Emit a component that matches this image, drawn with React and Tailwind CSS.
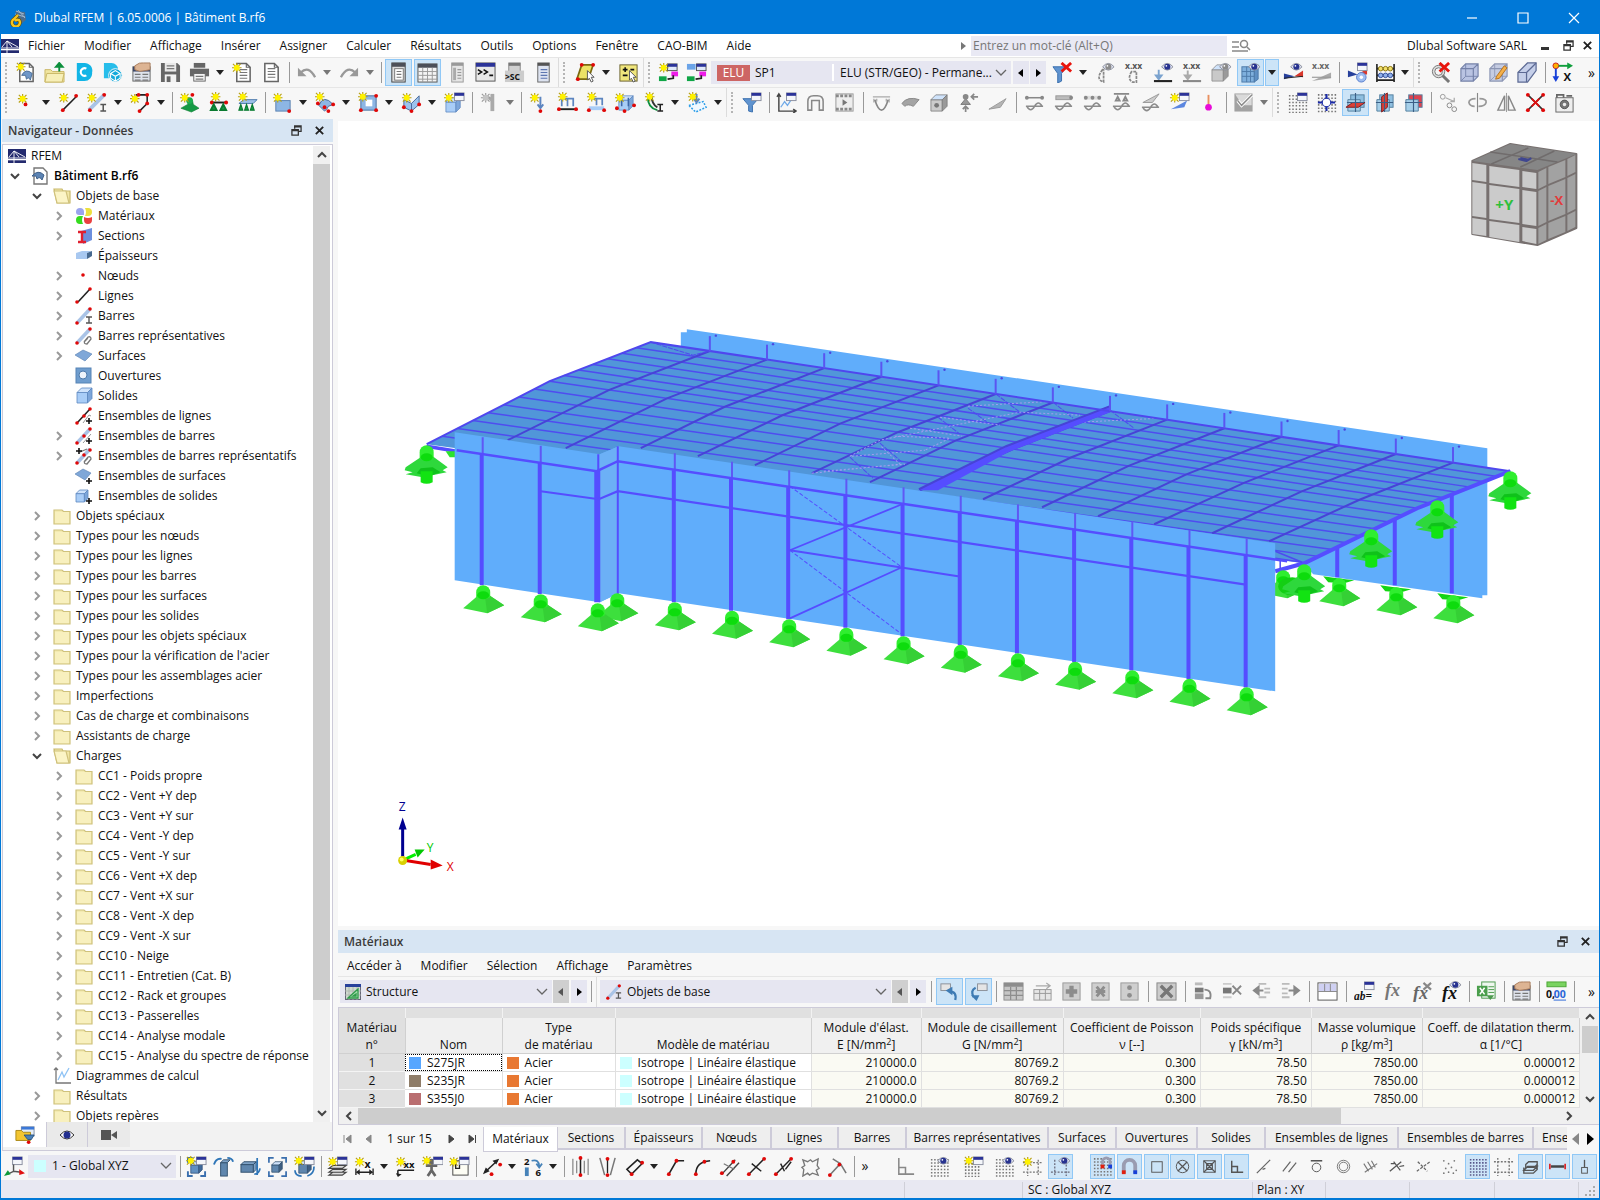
import { createElement } from "react";

/* ---------- drawing helpers for the 22×22 icons ---------- */
const g = (...k) => createElement("g", null, ...k);
const p = (d, s = "#6b6b6b", w = 1.5, f = "none") => <path d={d} stroke={s} strokeWidth={w} fill={f} />;
const r = (x, y, w, h, f = "#888", s = "none") => <rect x={x} y={y} width={w} height={h} fill={f} stroke={s} />;
const c = (x, y, q, f = "#e00808", s = "none") => <circle cx={x} cy={y} r={q} fill={f} stroke={s} />;
const t = (x, y, s, z = 9, f = "#333", i = "normal") => (
  <text x={x} y={y} fontSize={z} fill={f} fontStyle={i} fontWeight="700" fontFamily={i === "italic" ? "Liberation Serif" : "Open Sans"}>{s}</text>
);
const dots = (...a) => g(...a.map(([x, y]) => c(x, y, 2)));
const star = (x = 6, y = 6, a = "#fff200", b = "#b8a010") =>
  g(p(`M${x - 5} ${y}h10M${x} ${y - 5}v10M${x - 4} ${y - 4}l8 8M${x + 4} ${y - 4}l-8 8`, b, 1.2), c(x, y, 3.1, a));
const gstar = (x, y) => star(x, y, "#c4c4c4", "#999");
const win = (x = 11, y = 1) => g(r(x, y, 10, 8, "#f4f6fa", "#8a8fa0"), r(x, y, 10, 3, "#2b3398"));
const eye = (x = 15, y = 5, f = "#27328f") =>
  g(p(`M${x - 6} ${y}q6 -7 12 0q-6 7 -12 0z`, "#8a8f9c", 1, "#dfe3f2"), c(x, y, 3.2, f), c(x - 1, y - 1, 0.9, "#fff"));
const geye = (x, y) => eye(x, y, "#8b8b8b");
const node = (a, b) => p(`M${a}L${b}`, "#222", 1.6);
const ibeam = (x, y, f = "#555") => p(`M${x} ${y}h6M${x} ${y + 7}h6M${x + 3} ${y}v7`, f, 1.6);
const grid = (x, y, n, s, f = "#777") => (
  <path d={Array.from({ length: n }, (_, i) => `M${x} ${y + i * s}h${(n - 1) * s + 2}`).join("")} stroke={f} strokeWidth="1.6" strokeDasharray={`1.6 ${s - 1.6}`} />
);
const cube = (x, y, s, a = "#a9cdf7", b = "#7da6da", d = "#5d88c0") =>
  g(p(`M${x} ${y + s * 0.3}h${s * 0.7}v${s * 0.7}h${-s * 0.7}z`, d, 0.8, a),
    p(`M${x} ${y + s * 0.3}l${s * 0.3} ${-s * 0.3}h${s * 0.7}l${-s * 0.3} ${s * 0.3}z`, d, 0.8, "#cfe3fb"),
    p(`M${x + s * 0.7} ${y + s * 0.3}l${s * 0.3} ${-s * 0.3}v${s * 0.7}l${-s * 0.3} ${s * 0.3}z`, d, 0.8, b));
const wire = (f, s) => g(p("M2 7h13v13h-13zM2 7l5 -5h13v13l-5 5M15 7l5 -5", s, 1.2, f), p("M7 2v13h13M7 15l-5 5", s, 0.9));
const sheet = (x = 5) => g(p(`M${x} 1.5h10l4 4v15h-14z`, "#666", 1.6, "#fff"), p(`M${x + 10} 1.5v4h4`, "#666", 1.2));
const lines = (x, y, n, w, s = "#777") => p(Array.from({ length: n }, (_, i) => `M${x} ${y + i * 3}h${w}`).join(""), s, 1.2);
const wave = (y, s = "#8b8b8b") => p(`M2 ${y + 1}h18M3 ${y + 1}q4 7 8 0q4 -7 8 0`, s, 1.6);
const magnet = g(p("M5 18v-8a6 6 0 0 1 12 0v8", "#9a9cb0", 4), r(3, 15, 4, 4, "#e02010"), r(15, 15, 4, 4, "#1740d8"));
const planes = (n) => g(
  r(6, 3, 14, 13, n === 2 ? "#dd4350" : "#8fbfe0", "#54809f"),
  p("M3 8h13v12h-13z", "#54809f", 1, "#a5cfe9"),
  n === 0 ? p("M1 16l7 -5h13l-7 5z", "#7b1d20", 1, "#dc4038") : null,
  n === 1 ? p("M8 5l6 -4v15l-6 5z", "#7b1d20", 1, "#dc4038") : null,
  p("M11 1v20M2 11h18", "#3b5f86", 1.2));
const cross = (x, y) => p(`M${x - 3} ${y}h6M${x} ${y - 3}v6`, "#111", 1.6);
const hand = g(r(2, 5, 18, 15, "#dfe3ec", "#666"), r(2, 5, 18, 5, "#3b4668"), p("M4 4q5 -4 9 -3l7 0v7l-5 1q-6 2 -11 -1z", "#a97d5c", 1, "#ddb493"), lines(4, 13, 3, 6), lines(12, 13, 3, 6));
const gtable = g(r(1, 2, 20, 18, "#c6c6c6", "#8f8f8f"), r(1, 2, 20, 4, "#8d8d8d"), p("M1 10h20M1 15h20M8 6v14M14 6v14", "#8d8d8d", 1.3));

const icons = {
  /* file bar */
  "Nouveau modèle": g(sheet(5), p("M7 14q4 -8 11 -2l-2 7q-1 -4 -4 -1l-1 -4z", "#4b6d96", 1, "#6f97c8"), star(6, 5)),
  "Ouvrir": g(p("M1 8h6l2 2h12v11h-20z", "#c9b765", 1, "#f1e5a0"), p("M3 12h18l-2 9h-18z", "#c9b765", 1, "#f7efb8"), p("M16 10v-6M12.5 5l3.5 -4l3.5 4z", "#0c8f3c", 2, "#0c8f3c")),
  "Dlubal Center": g(p("M4 1h8a8 8 0 0 1 8 10a8 8 0 0 1 -8 9h-8z", "none", 0, "#12b5e6"), p("M14 7a4 4 0 1 0 0 7", "#fff", 2.2)),
  "Blocs": g(p("M2 1h8a7 7 0 0 1 7 7v9h-15z", "none", 0, "#27bdea"), c(14, 14, 7, "#12a9db", "#f7f7f7"), p("M9 12l5 -3l5 3v5l-5 3l-5 -3zM9 12l5 3l5 -3M14 15v5", "#fff", 1.1)),
  "Gestionnaire": hand,
  "Enregistrer": g(p("M1 1h17l3 3v17h-20z", "none", 0, "#666"), r(5, 1, 12, 9, "#e9e9e9"), lines(7, 4, 2, 8), r(5, 13, 12, 8, "#f2f2f2"), r(7, 15, 4, 6, "#666")),
  "Imprimer": g(r(5, 1, 12, 5, "#666"), r(1, 7, 20, 8, "#666"), r(5, 12, 12, 8, "#f4f4f4", "#666"), lines(7, 15, 2, 8)),
  "Nouveau rapport": g(sheet(5), lines(8, 8, 4, 8), star(5, 6)),
  "Rapport": g(sheet(4), lines(7, 7, 4, 8)),
  "Annuler": g(p("M5 11q8 -8 15 5", "#999", 2.4), p("M2 6v9h9z", "none", 0, "#999")),
  "Rétablir": g(p("M17 11q-8 -8 -15 5", "#999", 2.4), p("M20 6v9h-9z", "none", 0, "#999")),
  "Navigateur": g(r(4, 1, 14, 20, "#dcdcdc", "#444"), r(4, 1, 14, 4, "#4c4f58"), r(7, 7, 9, 12, "#fff", "#777"), lines(9, 10, 3, 5)),
  "Tables": g(r(1, 2, 20, 19, "#f4f4f4", "#555"), r(1, 2, 20, 4, "#4c4f58"), p("M1 10h20M1 14h20M1 18h20M6 6v15M11 6v15M16 6v15", "#999", 1)),
  "Panneau": g(r(6, 1, 12, 20, "#e5e5e5", "#999"), r(6, 1, 12, 3, "#999"), p("M9 6v13", "#aaa", 3), lines(12, 8, 4, 4, "#999")),
  "Console": g(r(1, 1, 20, 19, "#e8e8e8", "#555"), r(1, 1, 20, 4, "#2b3398"), p("M3 8l4 2.500l-4 2.500M9 8l4 2.500l-4 2.500M15 14h4", "#111", 1.6)),
  "Script": g(r(5, 1, 12, 9, "#d0d0d0", "#888"), r(5, 1, 12, 3, "#777"), r(1, 9, 20, 12, "#ccc"), t(1, 19, ">SC", 9, "#111")),
  "Blocs-notes": g(r(5, 1, 12, 20, "#dde3f0", "#666"), r(5, 1, 12, 3, "#555"), lines(8, 8, 4, 7, "#5d76b0")),
  "Plan de travail": g(p("M7 3h12l-5 15h-12z", "#7a6a10", 1.8, "#ece265"), dots([7, 3], [19, 3], [3, 18]), p("M13 9l7 7h-3l2 4l-2 1l-2 -4l-2 2z", "#555", 1, "#fff")),
  "Sélection": g(r(2, 3, 18, 17, "#f0e67c", "#6a6030"), p("M5 8h5M7.5 5.5v5M5 14h5M13 8h4", "#111", 1.6), p("M12 9l7 7h-3l2 4l-2 1l-2 -4l-2 2z", "#555", 1, "#fff")),
  "Nouveau cas": g(r(10, 2, 10, 7, "#dfe8fa", "#555"), r(10, 2, 10, 3, "#2b3398"), star(6, 6), r(1, 15, 8, 5, "#0fa546"), r(14, 10, 7, 5, "#ee1ce8"), p("M10 18l6 -1v-3", "#222", 1.8)),
  "Cas de charge": g(r(1, 2, 9, 6, "#6ba4e8"), r(11, 2, 10, 7, "#dfe8fa", "#555"), r(11, 2, 10, 3, "#2b3398"), r(1, 15, 8, 5, "#0fa546"), r(14, 10, 7, 5, "#ee1ce8"), p("M10 18l6 -1v-3", "#222", 1.8)),
  "Supprimer filtre": g(p("M1 5h14l-5 7v8l-4 2v-10z", "#3a6fae", 1, "#5f93cf"), p("M10 1l10 9M20 1l-10 9", "#e8140c", 3)),
  "Afficher appuis": g(<path d="M8 8q-8 10 1 13v-13z" stroke="#888" strokeWidth="1.800" strokeDasharray="3 1" />, geye(14, 5)),
  "Valeurs appuis": g(t(1, 7, "x.xx", 9, "#555"), <path d="M8 10q-5 8 1 11h4v-11z" stroke="#888" strokeWidth="1.800" strokeDasharray="3 1" />),
  "Afficher charges": g(p("M6 8v9M3 14l3 4l3 -4z", "#7ba3cf", 2, "#7ba3cf"), p("M1 20h19", "#222", 2.200), eye(15, 5)),
  "Valeurs charges": g(t(1, 7, "x.xx", 9, "#555"), p("M6 9v8M3 14l3 4l3 -4z", "#aaa", 2), p("M1 20h19", "#888", 2.200)),
  "Afficher solides": g(cube(1, 3, 17, "#c9c9c9", "#9a9a9a", "#888"), geye(15, 5)),
  "Maillage": g(r(2, 5, 13, 16, "#7fb0dd", "#4d7aa8"), p("M2 10h13M2 15h13M7 5v16M11 5v16", "#4d7aa8", 1), p("M15 5l4 -2v15l-4 3z", "#4d7aa8", 1, "#5f90c4"), eye(15, 5)),
  "Résultats": g(p("M1 18l11 -3l9 -6v7l-9 -1z", "none", 0, "#d9382d"), p("M1 12v6l11 -3z", "none", 0, "#27409b"), p("M1 17l20 -2", "#222", 1), eye(14, 5)),
  "Valeurs résultats": g(t(1, 7, "x.xx", 9, "#666"), p("M1 20l20 -9v6z", "none", 0, "#aaa"), p("M1 16h20", "#999", 1.2)),
  "Calculer": g(p("M1 9v7l10 -3z", "none", 0, "#27409b"), p("M11 13l10 -6v6z", "none", 0, "#d9382d"), win(11, 1), c(15, 16, 5, "#9dbcf0", "#5a80cf"), c(15, 16, 1.8, "#fff")),
  "Boulier": g(p("M2 2v19M20 2v19M2 7h18M2 14h18M2 19h18", "#222", 1.7), g(...[6, 11, 16].map((x) => c(x, 7, 2.4, "#f2e06a", "#8a7410"))), g(...[6, 11, 16].map((x) => c(x, 14, 2.4, "#8fb0ea", "#334f9a")))),
  "Zoom tout": g(c(9, 10, 6.500, "#ddd", "#777"), c(9, 10, 4, "#f5f5f5", "#777"), p("M13 14l7 7", "#777", 3), p("M10 1l10 9M20 1l-10 9", "#e8140c", 3)),
  "Vue filaire": wire("#b9c3e2", "#7481a8"),
  "Vue modifier": g(wire("#c5cce2", "#8c96b4"), p("M9 15l8 -11l3 2l-8 11l-4 1z", "#b5701c", 1, "#f4b04a")),
  "Vue perspective": g(p("M1 11l10 -10h9v8l-9 12h-10z", "#5c6a94", 1.3, "#c5cfe9"), p("M1 11h9v10M10 11l10 -10", "#5c6a94", 1.3, "none")),
  "Vue X": g(c(4, 4, 3, "#ffb000", "#c22"), p("M7 4h10", "#0f9f3c", 2), p("M16 0.5l6 3.5l-6 3.5z", "none", 0, "#0f9f3c"), p("M4 7v9", "#1740d8", 2), p("M0.5 15l3.500 6l3.500 -6z", "none", 0, "#1740d8"), t(12, 20, "X", 12, "#111")),
  /* insert bar */
  "Nœud": g(star(8, 7), dots([11, 13])),
  "Ligne": g(node("5 19", "19 5"), star(6, 6), dots([5, 19], [19, 4])),
  "Barre": g(p("M2 19L18 3", "#a9c3e6", 4), star(5, 6), dots([3, 19], [18, 3]), ibeam(14, 13)),
  "Polyligne": g(p("M6 3h12v9l-8 8", "#222", 1.6), star(5, 7), dots([9, 3], [18, 3], [18, 12], [10, 20])),
  "Appui nodal": g(p("M10 8q2 -2 4 0l1 5l6 4l-8 4l-11 -4l7 -4z", "#0a7a30", 0.6, "#149a44"), c(11, 9, 3.5, "#1cae50"), star(6, 6), dots([14, 3])),
  "Appui linéique": g(p("M3 11h17", "#222", 2), dots([4, 11], [19, 11]), p("M6 13l3 6h-6zM16 13l3 6h-6z", "#0a7a30", 2, "#149a44"), star(8, 5)),
  "Appui surfacique": g(p("M2 12l5 -4h14l-4 4z", "#4e7aad", 1, "#9cc0e8"), p("M4 13l2 6h-4zM10 13l2 6h-4zM16 13l2 6h-4z", "#0a7a30", 1.2, "#149a44"), star(6, 5)),
  "Surface": g(r(4, 9, 15, 11, "#8db6e4", "#5b82b2"), star(6, 6), dots([18, 20])),
  "Coque": g(p("M4 14q5 -12 15 -1l-5 2q-1 3 -4 5z", "#48699a", 1, "#8db6e4"), star(5, 5), dots([3, 12], [10, 16], [19, 13], [14, 20])),
  "Ouverture": g(r(3, 4, 16, 15, "#8db6e4", "#496fa0"), r(8, 8, 7, 7, "#fff"), star(5, 5), dots([3, 19], [19, 4], [19, 19])),
  "Intersection": g(p("M3 8l8 4l8 -8v9l-8 7l-8 -4z", "#48699a", 1, "#9cc3ee"), p("M11 12v8", "#48699a", 1), star(6, 6), dots([3, 16], [11, 20], [19, 13])),
  "Solide": g(cube(2, 6, 15), win(11, 1), star(5, 6)),
  "Jonction": g(p("M14 2v18", "#aaa", 4), p("M9 5l5 4", "#aaa", 3), gstar(7, 6)),
  "Charge nodale": g(p("M13 5v12M10 13l3 4l3 -4", "#5c85c0", 2), star(7, 6), dots([13, 20])),
  "Charge de barre": g(p("M5 7h12v8M11 7v8M5 7v8", "#5c85c0", 1.8), p("M2 18h18", "#222", 2), dots([2, 18], [20, 18]), star(6, 5)),
  "Charge linéique": g(p("M5 7h12v7M11 7v7", "#5c85c0", 1.8), r(3, 15, 16, 4, "#a9cdf7"), dots([3, 19], [19, 19]), star(6, 5)),
  "Charge surfacique": g(cube(4, 4, 15), p("M7 6v9M14 6v9", "#3d66a8", 1.6), star(5, 6), dots([2, 17], [10, 20], [20, 14])),
  "Charge libre": g(p("M4 5q0 12 10 14", "#0c8f3c", 2), p("M8 4q0 9 6 12", "#333", 2), star(6, 5), ibeam(14, 13, "#222")),
  "Charge polygonale": g(<path d="M2 14l15 -4l3 6l-11 5z" stroke="#2a9de8" strokeWidth="1.600" strokeDasharray="2 1.500" fill="#f0f8ff" />, p("M10 2v8M7 7l3 4l3 -4", "#5c85c0", 2), star(6, 5)),
  "Filtre": g(p("M2 7h16l-6 7v7l-4 -1v-6z", "#3a6fae", 1, "#5f93cf"), win(11, 1)),
  "Diagramme": g(p("M3 3v17h18M1 5l2 -3l2 3M18 18l3 2l-3 2", "#444", 1.5), p("M5 16l4 -6l3 4l4 -6", "#6fa9e8", 1.3), win(11, 1)),
  "Portique": p("M3 19v-9q0 -6 6 -6h4q6 0 6 6v9h-4v-10h-8v10z", "#888", 1.6),
  "Animation": g(r(2, 2, 18, 18, "#eee", "#999"), <path d="M2 4h18M2 18h18" stroke="#888" strokeWidth="3" strokeDasharray="3 1.500" />, p("M9 7.5l5 3.500l-5 3.500z", "none", 0, "#777")),
  "Déformée": g(p("M2 5h18M3 7v4M19 7v4M6 7v3M16 7v3", "#aaa", 1.3), p("M4 8q7 22 14 0", "#888", 1.8)),
  "Surface grise": g(p("M2 12q6 -8 18 -4l-6 7q-6 -3 -9 0z", "#888", 1, "#a4a4a4")),
  "Dé": g(cube(2, 3, 17, "#ccc", "#999", "#777"), c(8, 14, 2.5, "#777")),
  "Réactions": g(p("M3 13l5 -6l5 6z", "#777", 1, "#999"), c(8, 5, 3, "#888"), p("M14 5h7M17 2l-3 3l3 3M8 21v-6M5 18l3 -3l3 3", "#888", 1.8)),
  "Rampe": p("M2 18l18 -11l-6 9z", "#999", 1, "#b5b5b5"),
  "Efforts internes": g(p("M3 6h16", "#888", 1.600), c(3, 6, 2, "#888"), c(19, 6, 2, "#888"), wave(14)),
  "Contraintes": g(r(3, 4, 16, 4, "#bbb", "#999"), c(19, 6, 2, "#888"), wave(14)),
  "Ressorts": g(r(2, 4, 18, 4, "#ddd"), c(4, 6, 2, "#888"), c(11, 6, 2, "#888"), c(18, 6, 2, "#888"), wave(14)),
  "Appuis linéiques": g(p("M3 2h16M5 9l2 -4l2 4zM13 9l2 -4l2 4z", "#888", 2), wave(14)),
  "Sections résultats": g(p("M3 11l17 -9l-7 9z", "#999", 1, "#ccc"), wave(15)),
  "Résultats étoile": g(p("M2 18l17 -9l-3 7z", "none", 0, "#5b86e0"), win(11, 1), star(6, 6)),
  "Épingle": g(p("M11 3v12", "#e89060", 2), c(11, 16, 3.5, "#e80cd8")),
  "Vérification": g(r(2, 2, 18, 18, "#dadada", "#aaa"), p("M2 2v18h18v-6h-10z", "none", 0, "#a2a2a2"), p("M5 9l4 5l11 -11", "#fff", 3.500), p("M5 9l4 5l11 -11", "#8a8a8a", 1.500)),
  "Grille": g(grid(2, 4, 6, 3.5), win(11, 1)),
  "Accrochage": g(grid(2, 3, 6, 3.5), c(11, 11, 4.5, "#fff", "#1a2aa8"), p("M11 2v5M11 15v5M2 11h5M15 11h5", "#1a2aa8", 2.200)),
  "Plan XY": planes(0),
  "Plan XZ": planes(1),
  "Plan YZ": planes(2),
  "Copier": g(c(5, 5, 2.5, "none", "#999"), c(12, 14, 2.5, "none", "#888"), c(17, 18, 2.5, "none", "#888"), p("M8 6l9 4M17 6v4h-4", "#aaa", 1.3)),
  "Rotation": g(p("M13 7q8 0 7 4q-1 4 -8 4M9 7q-7 0 -7 4q1 4 6 4", "#999", 1.8), p("M11 1v20", "#888", 1.2)),
  "Miroir": g(p("M9 4v15h-7zM13 4v15h7z", "#888", 1.5), p("M11 1v20", "#999", 1)),
  "Supprimer": g(p("M3 3l16 16M19 3l-16 16", "#333", 1.6), p("M7 7l8 8M15 7l-8 8", "#e01010", 2), dots([3, 3], [19, 19], [19, 3], [3, 19])),
  "Options d’affichage": g(r(2, 6, 18, 15, "#eee", "#666"), p("M3 6v-3h7v3M13 4h6", "#666", 1.8), c(11, 13, 4.500, "#777", "#555"), c(11, 13, 1.8, "#eee")),
  /* table bar */
  "Synchroniser vue": g(r(2, 3, 10, 7, "#e5e5e5", "#8a8f98"), p("M17 20q2 -9 -6 -9", "#3f7cb4", 2.4), p("M14 6v9l-7 -5z", "none", 0, "#3f7cb4")),
  "Synchroniser table": g(r(10, 3, 10, 7, "#e5e5e5", "#8a8f98"), p("M8 7q-6 3 -2 10", "#3f7cb4", 2.4), p("M3 15h9l-3 6z", "none", 0, "#3f7cb4")),
  "Tableau": gtable,
  "Insérer ligne": g(r(2, 9, 18, 11, "#e6e6e6", "#999"), p("M2 13h18M8 9v11M14 9v11", "#999", 1), p("M4 5l14 0M15 2l4 3l-4 3", "#aaa", 1.3)),
  "Ajouter": g(r(2, 2, 18, 18, "#cfcfcf", "#999"), p("M11 5v12M5 11h12", "#8d8d8d", 4.500)),
  "Réduire": g(r(2, 2, 18, 18, "#cfcfcf", "#999"), p("M7 6l8 10M15 6l-8 10M6 11h10", "#8d8d8d", 3)),
  "Fractionner": g(r(2, 2, 18, 18, "#cfcfcf", "#999"), c(11, 7, 2.5, "#8d8d8d"), c(11, 15, 2.5, "#8d8d8d")),
  "Effacer": g(r(1, 2, 20, 18, "#ccc", "#888"), p("M5 5l12 12M17 5l-12 12", "#777", 3.5)),
  "Déplacer ligne": g(r(2, 7, 9, 5, "#777"), r(2, 13, 9, 6, "#999"), p("M2 3h8", "#bbb", 3), p("M12 9q8 0 6 9h-5", "#888", 2)),
  "Supprimer ligne": g(r(1, 7, 9, 6, "#777"), p("M1 3h9M1 17h9", "#ccc", 2), p("M11 5l9 9M20 5l-9 9", "#888", 2)),
  "Décaler gauche": g(p("M4 10h9M8 6l-5 4l5 4z", "#888", 2, "#888"), p("M8 3h8M14 8h6M14 12h6M8 17h8", "#bbb", 2)),
  "Décaler droite": g(p("M9 10h9M15 6l5 4l-5 4z", "#888", 2, "#888"), p("M2 3h8M2 8h6M2 13h6M2 17h8", "#bbb", 2)),
  "Vue tableau": g(r(1, 2, 20, 18, "#fff", "#555"), r(2, 3, 18, 8, "#cfd0f2"), p("M1 11h20M8 3v8M14 3v8", "#888", 1)),
  "Renommer": g(win(11, 1), t(0, 20, "ab=", 12, "#111", "italic")),
  "Fonction": t(2, 16, "fx", 19, "#777", "italic"),
  "Supprimer fonction": g(t(1, 19, "fx", 19, "#666", "italic"), p("M12 2l8 7M20 2l-8 7", "#888", 2.2)),
  "Voir fonction": g(t(1, 19, "fx", 19, "#111", "italic"), eye(15, 4)),
  "Excel": g(r(6, 1, 14, 17, "#eef7ee", "#4c9a4e"), r(1, 5, 11, 11, "#4a9e4c"), p("M4 7l5 7M9 7l-5 7", "#fff", 1.6), p("M13 6h6M13 9h6M13 12h6", "#4c9a4e", 1), p("M11 15h8l-4 5z", "none", 0, "#4c9a4e")),
  "Afficher valeurs": hand,
  "Décimales": g(r(1, 1, 20, 5, "#79d35f", "#4aa535"), t(0, 18, "0,", 11, "#111"), t(8, 18, "00", 11, "#2a66d8"), p("M8 20h13", "#2a66d8", 1)),
  /* bottom bar */
  "Système de coordonnées": g(win(9, 1), p("M10 9v7l-6 3M10 16l8 1", "#555", 1.5), p("M0 21l4 -6l3 4z", "none", 0, "#0c9a3a"), p("M22 18l-6 -4v6z", "none", 0, "#e01010")),
  "Vue clipping": g(p("M2 7v-5h5M2 16v5h5M20 16v5h-5", "#3a6fae", 2), cube(5, 6, 12, "#5f8fc0", "#3f6a9a", "#2f4f7a"), win(11, 1), star(5, 5)),
  "Haut": g(r(8, 7, 7, 14, "#5f86ad", "#33526f"), p("M8 7l3 -3h7l-3 3z", "#33526f", 1, "#7ea2c6"), p("M1 9q2 -7 8 -6M15 2q5 0 6 4", "#2f76b8", 2)),
  "Côté": g(r(1, 9, 13, 8, "#5f86ad", "#33526f"), p("M1 9l3 -3h13l-3 3zM14 9l3 -3v8l-3 3z", "#33526f", 1, "#7ea2c6"), p("M18 2v18M15 19q5 0 6 -6", "#2f76b8", 1.800)),
  "Boîte": g(p("M2 7v-5h5M2 16v5h5M20 16v5h-5M15 2h5v5", "#3a6fae", 1.8), cube(5, 6, 11, "#5f86ad", "#3f5f82", "#33526f")),
  "Pivoter": g(cube(5, 5, 13, "#5f86ad", "#3f5f82", "#33526f"), p("M1 15q0 6 7 6M21 11q0 8 -7 10", "#2f76b8", 1.8), win(11, 1), star(5, 5)),
  "Calques": g(p("M2 17l4 -3h14l-4 3zM2 13l4 -3h14l-4 3zM2 20l4 -3h14l-4 3z", "#444", 1.2, "#ddd"), win(11, 1), star(6, 6)),
  "Cote": g(p("M2 13v7M20 13v7M3 17h16", "#222", 1.4), p("M2 17l4 -3v6zM20 17l-4 -3v6z", "none", 0, "#222"), t(11, 13, "x", 11, "#111"), star(6, 6)),
  "Cotation": g(p("M3 15h17M3 15v4", "#222", 1.6), p("M1 18l6 1l-4 3z", "none", 0, "#222"), t(9, 13, "xx", 10, "#111"), star(6, 6)),
  "Personne": g(c(10, 6, 3, "#666"), p("M4 10h12M10 9v6l-4 6M10 15l4 6", "#666", 2.8), win(12, 1), star(5, 5)),
  "Note": g(r(4, 5, 16, 15, "#fdfdf4", "#444"), p("M7 4v9h4v-9", "#222", 1.4), win(11, 1), star(5, 6)),
  "Mesurer": g(p("M3 17l13 -12", "#222", 1.6), p("M1 19l3 -7l4 4zM18 3l-7 2l4 4z", "none", 0, "#222"), dots([19, 9], [10, 19])),
  "Renuméroter": g(t(1, 9, "2", 10, "#111"), t(13, 21, "6", 10, "#111"), r(2, 12, 4, 9, "#4682b8"), p("M9 5q8 -2 8 6M14 8l3 4l3 -4", "#4682b8", 1.8)),
  "Ligne parallèle": g(p("M3 3v17M19 3v17M7 5v13M15 5v13", "#888", 1.3), node("11 3", "11 19"), dots([11, 2], [11, 20])),
  "Ligne angle": g(p("M3 2l5 18M19 2l-5 18", "#777", 1.6), p("M11 3v15", "#222", 1.4), dots([11, 3], [11, 20])),
  "Rectangle": g(p("M3 14l11 -10l5 4l-11 11z", "#222", 1.6), dots([19, 7], [8, 19])),
  "Ligne coudée": g(p("M4 19l8 -14h8", "#222", 1.7), dots([4, 19], [12, 5])),
  "Arc": g(p("M4 19q0 -13 15 -14", "#222", 1.7), dots([4, 19], [13, 6])),
  "Parallèles": g(p("M3 19l14 -15M8 21l13 -14", "#444", 1.5), p("M5 8l11 6", "#777", 1.2), dots([3, 18], [15, 6])),
  "Perpendiculaire": g(p("M3 19l16 -16M6 8l10 8", "#222", 1.5), dots([3, 19], [19, 3])),
  "Diviser": g(p("M3 19l16 -16M8 8l4 8M13 14l6 -8", "#222", 1.5), dots([3, 19], [19, 3])),
  "Polygone": p("M3 4l5 2l3 -2l2 2l6 -3l-1 7l2 3l-3 2l2 5l-6 -2l-3 2l-2 -2l-5 3l1 -7l-2 -2l3 -2z", "#777", 1.4),
  "Tangente": g(p("M3 20l11 -12l6 10M6 3l8 5", "#777", 1.6), dots([3, 20], [13, 9])),
  "Équerre": p("M4 2v17h16M4 12h7v7", "#888", 1.6),
  "Points": g(grid(2, 4, 6, 3.4), eye(15, 5)),
  "Nouvelle grille": g(grid(2, 8, 5, 3.4), win(11, 1), star(6, 5)),
  "Grille visible": g(grid(2, 4, 6, 3.4), r(10, 1, 11, 8, "#f7f7f7"), eye(15, 5)),
  "Nouveau guide": g(<path d="M6 6v15M1 17h20M17 4v17M1 7h20" stroke="#777" strokeWidth="1.300" strokeDasharray="2 1.500" />, star(6, 6)),
  "Guides visibles": g(<path d="M5 4v17M1 17h20M17 9v12" stroke="#667" strokeWidth="1.300" strokeDasharray="2 1.500" />, eye(15, 5)),
  "Aimant grille": g(grid(2, 3, 6, 3.4), p("M11 9v-3a4 4 0 0 1 8 0v3", "#9a9cb0", 2.8), r(9, 9, 4, 4, "#e02010"), r(17, 9, 4, 4, "#1740d8")),
  "Aimant": magnet,
  "Extrémité": r(6, 6, 11, 11, "none", "#555"),
  "Centre": g(c(11, 11, 6.500, "none", "#555"), p("M6 6l10 10M16 6l-10 10", "#555", 1.3)),
  "Milieu": g(r(5, 5, 12, 12, "none", "#555"), p("M5 5l12 12M17 5l-12 12M8 8h6v6h-6z", "#555", 1.2)),
  "Orthogonal": p("M6 5v12h12M6 11h6v6", "#555", 1.5),
  "Proche": p("M4 18l14 -14M10 14l3 -1", "#666", 1.3),
  "Parallèle": p("M4 16l8 -10M10 17l8 -10", "#666", 1.3),
  "Tangent": g(p("M5 5h12", "#555", 1.6), c(11, 12, 4.5, "none", "#555")),
  "Quadrant": g(c(11, 11, 6.500, "none", "#777"), c(11, 11, 4.500, "none", "#777")),
  "Croisement": p("M4 8l5 8M8 6l5 8M12 5l4 7M5 17l13 -9", "#777", 1.2),
  "Prolongement": p("M4 16l12 -10M8 6l7 9M5 8l4 0M14 11l5 -1", "#555", 1.3),
  "Intersection apparente": <path d="M4 16l14 -10M5 6l10 10" stroke="#666" strokeWidth="1.300" strokeDasharray="3 1.500" />,
  "Nuage": g(...[[4, 5], [9, 8], [15, 5], [6, 13], [12, 12], [17, 15], [9, 17], [4, 18], [14, 18]].map(([x, y]) => c(x, y, 0.9, "#777"))),
  "Points de grille": grid(3, 4, 6, 3.2, "#558"),
  "Lignes guides": <path d="M5 2v19M17 2v19M1 6h20M1 17h20" stroke="#777" strokeWidth="1.400" strokeDasharray="2 1.600" />,
  "Calque fond": g(p("M4 15l4 -4h10l-4 4zM4 12v6h10l4 -4v-5", "#555", 1.4), p("M6 9l3 -3h9v3l-3 3h-9z", "#555", 1.4)),
  "Objets ligne": g(p("M4 11h14", "#444", 2.6), p("M3 8v6M19 8v6", "#e01010", 1.6)),
  "Objets nœud": g(r(8, 12, 6, 6, "none", "#555"), p("M11 12v-8", "#555", 1.4)),
};

/* ---------- tree icons (18×18) ---------- */
const folder = g(p("M1 3h8l1.500 1.500h6.5v12.500h-16z", "#cfc27c", 1.2, "#f3eab0"), p("M2 5h14v11h-14z", "none", 0, "#f8f0be"));
const openFolder = g(p("M1 2h8l1 2h7v12h-13z", "#c9b96c", 1.2, "#f1e7a8"), p("M1 4h12l3 12h-12z", "#d0c27c", 1.2, "#fbf4c6"));
const bar = p("M2 16L15 2", "#a9c3e6", 3.6);
const clip = p("M9 15l4 -5q3 -1 3 2l-4 5q-4 0 -2 -3l3 -3", "#777", 1.3);
const logo = g(r(0, 2, 18, 14, "#232a6e"), p("M0 11h18M1 10l5 -6l11 6M6 4v12M6 4l5 6", "#fff", 0.9), r(0, 12, 18, 1.3, "#fff"));
const smallDots = (...a) => g(...a.map(([x, y]) => c(x, y, 1.8)));
const treeIcons = {
  logo,
  file: g(p("M3 1h9l4 4v12h-13z", "#777", 1.4, "#fff"), p("M1 9q6 -7 12 -1l-2 5q-2 -4 -5 -1l-1 -3z", "#3e5f88", 1, "#5c84b4")),
  folder, open: openFolder,
  mat: g(p("M1 5a4 4 0 0 1 8 0v3h-5q-3 0 -3 -3z", "none", 0, "#9aa4ee"), p("M10 1h3a4 4 0 0 1 0 8h-3q2 -4 0 -8z", "none", 0, "#ece03e"), p("M8 9h-3a4 4 0 0 0 0 8h3q-2 -4 0 -8z", "none", 0, "#35dc1e"), p("M9 10q4 2 8 0v3a4 4 0 0 1 -8 0z", "none", 0, "#ea4040")),
  sec: g(p("M6 4l11 -3v12l-9 4z", "none", 0, "#6d8fdd"), p("M3 5h8M3 15h8M7 5v10", "#e02030", 2.4)),
  ep: g(p("M1 6l6 -2h10l-5 2zM1 6h11v6h-11z", "none", 0, "#a8c8f0"), p("M12 6l5 -2v5l-5 3z", "none", 0, "#47698f")),
  node: c(8, 8, 1.8),
  line: g(node("3 15", "15 2"), smallDots([2, 15], [15, 2])),
  bar: g(bar, smallDots([2, 16], [15, 2]), p("M11 10h6M11 16h6M14 10v6", "#555", 1.4)),
  barRep: g(bar, smallDots([2, 16], [15, 2]), clip),
  surf: p("M0 8l8 -5l9 4l-7 7z", "#5b82b2", 0.6, "#7fa7d8"),
  open2: g(r(1, 1, 15, 15, "#6f9dce", "#5784b6"), c(8, 8, 4, "#eef4fb", "#4d7aac")),
  solid: cube(2, 1, 15),
  setL: g(node("2 16", "15 2"), smallDots([2, 16], [9, 9], [15, 2]), p("M8 16l6 -8l2 1", "#999", 1), cross(14, 14)),
  setB: g(bar, smallDots([2, 16], [9, 9], [15, 2]), p("M8 16l8 -9", "#999", 1), cross(14, 14)),
  setR: g(bar, smallDots([2, 16], [9, 8], [15, 3]), p("M5 5l7 -3", "#777", 1.3), clip, cross(4, 4)),
  setS: g(p("M0 7l8 -5l8 4l-6 7z", "#5b82b2", 0.6, "#7fa7d8"), cross(14, 14)),
  setV: g(cube(1, 3, 12), cross(14, 14)),
  diag: g(p("M3 1v15h15M1 3l2 -2l2 2", "#777", 1.3), p("M5 13l4 -8l2 5l5 -9", "#8fc3f5", 1.3)),
};

const tree = [
  [0, "", "logo", "RFEM"], [1, "v", "file", "Bâtiment B.rf6"], [2, "v", "open", "Objets de base"],
  [3, ">", "mat", "Matériaux"], [3, ">", "sec", "Sections"], [3, "", "ep", "Épaisseurs"], [3, ">", "node", "Nœuds"],
  [3, ">", "line", "Lignes"], [3, ">", "bar", "Barres"], [3, ">", "barRep", "Barres représentatives"], [3, ">", "surf", "Surfaces"],
  [3, "", "open2", "Ouvertures"], [3, "", "solid", "Solides"], [3, "", "setL", "Ensembles de lignes"], [3, ">", "setB", "Ensembles de barres"],
  [3, ">", "setR", "Ensembles de barres représentatifs"], [3, "", "setS", "Ensembles de surfaces"], [3, "", "setV", "Ensembles de solides"],
  ...["Objets spéciaux", "Types pour les nœuds", "Types pour les lignes", "Types pour les barres", "Types pour les surfaces", "Types pour les solides",
    "Types pour les objets spéciaux", "Types pour la vérification de l'acier", "Types pour les assemblages acier", "Imperfections",
    "Cas de charge et combinaisons", "Assistants de charge"].map((s) => [2, ">", "folder", s]),
  [2, "v", "open", "Charges"],
  ...["CC1 - Poids propre", "CC2 - Vent +Y dep", "CC3 - Vent +Y sur", "CC4 - Vent -Y dep", "CC5 - Vent -Y sur", "CC6 - Vent +X dep", "CC7 - Vent +X sur",
    "CC8 - Vent -X dep", "CC9 - Vent -X sur", "CC10 - Neige", "CC11 - Entretien (Cat. B)", "CC12 - Rack et groupes", "CC13 - Passerelles",
    "CC14 - Analyse modale", "CC15 - Analyse du spectre de réponse"].map((s) => [3, ">", "folder", s]),
  [2, "", "diag", "Diagrammes de calcul"], [2, ">", "folder", "Résultats"], [2, ">", "folder", "Objets repères"],
];
const indent = ["", "", "pl-[22px]", "pl-[44px]"];

/* ---------- small shared parts ---------- */
const Icon = ({ name }) => <svg viewBox="0 0 22 22" className="size-[21px] shrink-0" fill="none" aria-hidden="true">{icons[name]}</svg>;
const Chevron = ({ dir, className = "text-[#444]" }) => (
  <svg viewBox="0 0 12 12" className={`size-3 shrink-0 ${className}`} fill="none" stroke="currentColor" strokeWidth="2" aria-hidden="true">
    <path d={{ v: "M2 4l4 4l4 -4", ">": "M4 2l4 4l-4 4", "<": "M8 2l-4 4l4 4", "^": "M2 8l4 -4l4 4" }[dir]} />
  </svg>
);
const Thin = () => (
  <svg viewBox="0 0 12 12" className="mr-1 size-3 shrink-0" fill="none" stroke="#666" strokeWidth="1.300" aria-hidden="true"><path d="M1 3l5 5l5 -5" /></svg>
);
const Restore = () => <svg viewBox="0 0 12 12" className="size-[11px]" fill="none" stroke="#333" strokeWidth="1.4" aria-hidden="true"><path d="M4 4v-3h7v6h-3M1 5h7v6h-7zM1 6h7M4 2h7" /></svg>;
const Cross = () => <svg viewBox="0 0 12 12" className="size-[11px]" fill="none" stroke="#222" strokeWidth="2" aria-hidden="true"><path d="M2 2l8 8M10 2l-8 8" /></svg>;
const Tri = ({ dir, className = "text-black" }) => (
  <svg viewBox="0 0 10 10" className={`size-[10px] ${className}`} fill="currentColor" aria-hidden="true"><path d={dir === "<" ? "M7 1v8l-5 -4z" : "M3 1v8l5 -4z"} /></svg>
);

/* "|" thin rule, ":" wide rule, "#" / "=" group edge with grip, "v" drop arrow, "*" pressed */
function Bar({ items, slot = "w-[29px]", box = "w-[27px] h-[27px]" }) {
  return items.map((it, i) => {
    if (it === "|") return <span key={i} className="flex h-[21px] w-[6px] shrink-0 justify-center"><i className="w-px bg-[#999]" /></span>;
    if (it === ":") return <span key={i} className="flex h-[21px] w-2 shrink-0 justify-center"><i className="w-px bg-[#999]" /></span>;
    if (it === "#" || it === "=") return (
      <span key={i} className={`flex shrink-0 items-center gap-1 self-stretch ${it === "#" ? "w-[13px]" : "w-[11px]"}`}>
        <i className="w-px self-stretch bg-[#dcdcdc]" /><i className="h-[21px] border-l-2 border-dotted border-[#b5b5b5]" />
      </span>
    );
    if (it === "v" || it === "v-" || it === "v*") return (
      <button key={i} aria-label="Plus d’options" className={`flex h-[27px] w-[14px] shrink-0 items-center pl-[2px] ${it === "v*" ? "border border-[#90c8f6] bg-[#cce4f7]" : ""}`}>
        <svg viewBox="0 0 8 5" className="w-2" aria-hidden="true"><path d="M0 0h8l-4 5z" fill={it === "v-" ? "#777" : "#222"} /></svg>
      </button>
    );
    const on = it[0] === "*";
    const name = on ? it.slice(1) : it;
    return (
      <span key={i} className={`flex shrink-0 justify-center ${slot}`}>
        <button aria-label={name} aria-pressed={on} className={`flex shrink-0 items-center justify-center ${box} ${on ? "border border-[#90c8f6] bg-[#cce4f7]" : ""}`}>
          <Icon name={name} />
        </button>
      </span>
    );
  });
}

const Combo = ({ label, value, icon, className }) => (
  <label className={`flex h-[23px] shrink-0 items-center bg-[#e6e6f1] ${className}`}>
    {icon}
    <select aria-label={label} className="min-w-0 flex-1 appearance-none bg-transparent outline-none"><option>{value}</option></select>
    <Thin />
  </label>
);
const Step = ({ dir, off }) => (
  <button aria-label={dir === "<" ? "Précédent" : "Suivant"} className={`mr-px flex h-[23px] w-4 shrink-0 items-center justify-center ${off ? "bg-[#cfcfcf]" : "bg-[#e6e6f1]"}`}>
    <Tri dir={dir} className={off ? "text-[#555]" : "text-black"} />
  </button>
);
const Grip = () => <i className="mx-1 h-[21px] shrink-0 border-l-2 border-dotted border-[#b5b5b5]" />;

/* ---------- 3D model ---------- */
const lerp = (a, b, k) => a + (b - a) * k;
const back = (k) => [651 + 859 * k, 342 + 129 * k];
const ridge = (k) => [550 + 867 * k, 381 + 127 * k];
const front = (k) => [427 + 877 * k, 444 + 119 * k];
const mix = (a, b, k) => [lerp(a[0], b[0], k), lerp(a[1], b[1], k)];
const path = (pts) => "M" + pts.map((q) => q.map((n) => Math.round(n * 10) / 10).join(" ")).join("L");
const rafters = Array.from({ length: 14 }, (_, i) => 710 + i * 57.13);
const rafterEnds = [[508, 440], [566, 448], [641, 448], [698, 456], [755, 465], [812, 473], [870, 482], [920, 490], [983, 499], [1042, 507], [1098, 516], [1154, 524], [1212, 533], [1269, 541]];
const purlins = Array.from({ length: 14 }, (_, i) => i + 1).map((i) => {
  const f = (k) => (i < 8 ? mix(front(k), ridge(k), i / 8) : mix(ridge(k), back(k), (i - 8) / 7));
  return path([f(0), f(1)]);
}).join("");
const columns = [482, 540, ...Array.from({ length: 11 }, (_, i) => 674 + i * 57.15)];
const colTop = (x) => (x < 600 ? 454 + (x - 482) * 0.149 : 470 + (x - 674) * 0.149);
const colBot = (x) => (x < 600 ? 585 + (x - 482) * 0.149 : 602 + (x - 674) * 0.149);

const Support = ({ x, y }) => (
  <g transform={`translate(${x} ${y})`}>
    <path d="M-6 4L-20 16L4 21L21 13L6 3z" fill="#3ddf3d" />
    <path d="M2 6L4 21L21 13L6 3z" fill="#35d035" />
    <path d="M-7 0a7 7 0 0 1 14 0v5q-7 4 -14 0z" fill="#2fee2f" />
    <ellipse cx="0" cy="3" rx="6" ry="4" fill="#0ddc0d" />
  </g>
);
const Hanging = ({ x, y }) => (
  <g transform={`translate(${x} ${y})`}>
    <path d="M-6 4L-21 14L-22 17L-14 19L-21 21L-4 24L20 19L16 17L21 14L6 3z" fill="#2ed83c" />
    <path d="M-6 15l12 -1l8 5l-12 4l-12 -3z" fill="#0fc21a" />
    <path d="M-6 18h12v11q-6 3 -12 0z" fill="#12e312" />
    <path d="M-7 -1a7 7 0 0 1 14 0v6q-7 4 -14 0z" fill="#2fee2f" />
    <ellipse cx="0" cy="4" rx="6" ry="4" fill="#0ddc0d" />
  </g>
);

const Model = () => (
  <svg viewBox="338 121 1261 804" className="block h-full w-full" preserveAspectRatio="xMidYMid slice" role="img" aria-label="Modèle 3D du bâtiment" fontFamily="Open Sans, sans-serif">
    <path d="M681 332h6v-3L1487 448V595H1482V598L1313 574L1300 560L1100 440L681 346z" fill="#60adfb" />
    {[[1337, 545, 577], [1394.5, 515, 585], [1451.5, 492, 593]].map(([x, a, b]) => <path key={x} d={`M${x} ${a}V${b}`} stroke="#554dff" strokeWidth="4" />)}
    <path d={path([front(0), ridge(0), back(0), back(1), ridge(1), front(1)]) + "z"} fill="#5196d9" />
    <path d={purlins} stroke="#4f4cf0" strokeWidth="1.500" fill="none" />
    <g fill="none" stroke="#4743d6" strokeWidth="2">
      {rafters.map((x, i) => {
        const k = (x - 651) / 859;
        return <path key={x} d={path([back(k), ridge(k), rafterEnds[i]])} />;
      })}
    </g>
    <path d="M651 342L693 355L710 351M996 394L1020 412M1053 402L1073 418M1110 410L1134 428M968 408L990 424M938 417L960 434M880 443L902 462M850 457L873 478" stroke="#4e4af0" strokeWidth="1" strokeDasharray="5 1" fill="none" />
    <path d="M968 406L1053 401M940 417L1000 425M910 428L962 436M895 436L950 438L925 450M852 456L925 450M824 471L905 464M850 456L880 440L960 424L1020 412L1080 415M1080 422L1160 418M812 473L900 464L880 445" stroke="#a29af0" strokeWidth="1" strokeDasharray="2 2" fill="none" />
    <path d="M1111 405L1110 412L1008 452L938 490H918L1006 446z" fill="#554dff" />
    <path d="M1110 406L1006 446L919 489" stroke="#4743d6" strokeWidth="2" fill="none" />
    <path d={path([front(0), ridge(0), back(0), back(1)])} stroke="#4f47ee" strokeWidth="2" fill="none" />
    <path d={path([back(1), ridge(1), front(1), [1275, 571]])} stroke="#554dff" strokeWidth="4" fill="none" />
    <path d="M1275 551L1302 562L1275 558M1280 560v8" stroke="#4e4af0" strokeWidth="1.5" fill="none" />
    {rafters.map((x) => {
      const y = 351 + (x - 710) * 0.1493;
      return <g key={x}><path d={`M${x} ${y - 15}V${y}`} stroke="#5a55f0" strokeWidth="2" /><circle cx={x + 6} cy={y - 15.5} r="1.200" fill="#4b46e0" /></g>;
    })}
    <path d="M427 446L457 451" stroke="#554dff" strokeWidth="3.500" />
    <path d="M446 451h10v6h-6z" fill="#2be32b" />
    <g><Support x={1283} y={577} /><ellipse cx="1292" cy="586" rx="14" ry="9" fill="#14cf14" /></g>
    <path d="M455 432L600 454L619 446L1275 543V691L619 593L600 602L455 580z" fill="#60adfb" />
    <path d="M600 454L619 446V593L600 602z" fill="#6cb0f6" />
    <g stroke="#554dff" fill="none">
      {columns.map((x) => <g key={x}><path d={`M${x} ${colTop(x)}V${colBot(x)}`} strokeWidth="4" /><path d={`M${x + 1} ${colTop(x) - 17}V${colTop(x)}`} strokeWidth="2" stroke="#5f58f4" /></g>)}
      <path d="M597.5 470V602" strokeWidth="6" />
      <path d="M598.5 454V470M618 446V594" strokeWidth="2" />
      <path d="M457 450L597 471L618 461L1287 561" strokeWidth="2.500" />
      <path d="M541 491L599 499L618 491L1244 584M790 550L958 576" strokeWidth="2.200" />
      <path d="M790 618L902 567M790 550L902 504" strokeWidth="1.800" />
      <path d="M790 486L902 567M790 550L902 634" strokeWidth="1" strokeDasharray="4 2" />
    </g>
    {[[483.5, 592], [541, 601], [617.5, 600], [598, 610]].map(([x, y]) => <Support key={x} x={x} y={y} />)}
    {Array.from({ length: 11 }, (_, i) => <Support key={i} x={675 + i * 57.15} y={609 + i * 8.5} />)}
    {[[1339, 585], [1396, 594], [1453, 602]].map(([x, y]) => <g key={x}><path d={`M${x - 16} ${y - 9}l14 2l17 2l-10 3l-16 -1z`} fill="#14d514" /><Support x={x} y={y} /></g>)}
    {[[427, 453], [1510, 479], [1437, 508], [1371, 537], [1304, 572]].map(([x, y]) => <Hanging key={x} x={x} y={y} />)}

    <g transform="translate(1440 120)" strokeLinejoin="round">
      <path d="M70 24L136 34V108L97 125L32 114V41z" fill="#77706f" stroke="#77706f" strokeWidth="2" />
      <path d="M70 24L136 34L97 50L32 41z" fill="#868686" />
      <path d="M50 32L117 42M51 44L88 28M80 47L114 31" stroke="#706c6c" strokeWidth="1.500" />
      <g fill="#cbcbcb">
        <path d="M32 43l14 2v17l-14 -2zM49 46l30 4v17l-30 -4zM82 51l14 2v16l-14 -2z" />
        <path d="M32 62l14 2v34l-14 -2zM49 65l30 4v34l-30 -4zM82 70l14 2v34l-14 -2z" />
        <path d="M32 98l14 2v16l-14 -2zM49 101l30 4v17l-30 -5zM82 107l14 2v15l-14 -3z" />
      </g>
      <g fill="#a2a2a2">
        <path d="M98 52l8 -4v17l-8 4zM108 47l17 -7v17l-17 7zM127 39l8 -4v17l-8 4z" />
        <path d="M98 71l8 -4v35l-8 4zM108 66l17 -7v35l-17 7zM127 58l8 -4v35l-8 4z" />
        <path d="M98 108l8 -4v16l-8 4zM108 103l17 -7v16l-17 7zM127 95l8 -4v16l-8 4z" />
      </g>
      <path d="M78 39l8 2l5 -3M80 38l9 2" stroke="#3f4690" strokeWidth="2" fill="none" />
      <text x="55" y="90" fontSize="15" fontWeight="700" fill="#2fbf3b">+Y</text>
      <text x="110" y="85" fontSize="13" fontWeight="700" fill="#e23b3b">-X</text>
    </g>

    <path d="M403 856V826" stroke="#000090" strokeWidth="3" /><path d="M399 829l4 -12l4 12z" fill="#000090" />
    <path d="M405 859L416 854" stroke="#00f000" strokeWidth="3" /><path d="M415 849l10 0l-7 8z" fill="#00c800" />
    <path d="M406 860L431 864" stroke="#e00000" strokeWidth="3" /><path d="M431 859l12 6l-12 4z" fill="#e00000" />
    <circle cx="403" cy="860" r="4.500" fill="#d8d000" /><circle cx="402" cy="859" r="2" fill="#ffff60" />
    <text x="399" y="811" fontSize="12" fill="#000090">Z</text>
    <text x="427" y="852" fontSize="12" fill="#00c800">Y</text>
    <text x="447" y="871" fontSize="12" fill="#e00000">X</text>
  </svg>
);

/* ---------- table data ---------- */
const U = ({ a, b, u, s }) => <>{a}<br />{b} [{u}{s ? <sup className="text-[9px] leading-none">{s}</sup> : null}]</>;
const cols = [
  ["w-[66px]", <>Matériau<br />n°</>], ["w-[97px]", "Nom"], ["w-[113px]", <>Type<br />de matériau</>], ["w-[196px]", "Modèle de matériau"],
  ["w-[110px]", <U a="Module d'élast." b="E" u="N/mm" s="2" />], ["w-[142px]", <U a="Module de cisaillement" b="G" u="N/mm" s="2" />],
  ["w-[137px]", <U a="Coefficient de Poisson" b="ν" u="--" />], ["w-[111px]", <U a="Poids spécifique" b="γ" u="kN/m" s="3" />],
  ["w-[111px]", <U a="Masse volumique" b="ρ" u="kg/m" s="3" />], ["w-[157px]", <U a="Coeff. de dilatation therm." b="α" u="1/°C" />],
];
const rows = [["1", "S275JR", "bg-[#57a6ff]"], ["2", "S235JR", "bg-[#8f7d68]"], ["3", "S355J0", "bg-[#b96e70]"]];
const nums = ["210000.0", "80769.2", "0.300", "78.50", "7850.00", "0.000012"];
const Swatch = ({ color }) => <i className={`size-3 shrink-0 ${color}`} />;

const tabs = [["Sections", "w-[68px]"], ["Épaisseurs", "w-[77px]"], ["Nœuds", "w-[69px]"], ["Lignes", "w-[67px]"], ["Barres", "w-[68px]"], ["Barres représentatives", "w-[142px]"],
  ["Surfaces", "w-[68px]"], ["Ouvertures", "w-[81px]"], ["Solides", "w-[68px]"], ["Ensembles de lignes", "w-[133px]"], ["Ensembles de barres", "w-[135px]"]];

export default function App() {
  return (
    <div className="flex h-screen min-w-0 flex-col overflow-hidden border-x border-b-2 border-[#0078d7] bg-[#f7f7f7] font-['Open_Sans','Noto_Sans',sans-serif] text-[12px] leading-4 text-[#111]">
      <header className="flex h-[34px] shrink-0 items-center bg-[#0078d7] pl-2 pt-px text-white">
        <svg viewBox="0 0 18 18" className="mr-[7px] size-[18px]" aria-hidden="true">
          <path d="M6 2l10 1l1 8l-5 4z" fill="#4b6d8d" /><path d="M7 2l8 3M6 5l10 3M9 1l7 8" stroke="#9fb8d0" fill="none" />
          <path d="M9 6l-4 4a4 4 0 1 0 5 1q-2 -1 -4 1" stroke="#5e4b08" strokeWidth="3.600" fill="none" />
          <path d="M9 6l-4 4a4 4 0 1 0 5 1q-2 -1 -4 1" stroke="#f7c51e" strokeWidth="2.400" fill="none" />
        </svg>
        <h1 className="flex-1">Dlubal RFEM | 6.05.0006 | Bâtiment B.rf6</h1>
        {["M1 6h10", "M1 1h10v10h-10z", "M1 1l10 10M11 1l-10 10"].map((d, i) => (
          <button key={d} aria-label={["Réduire", "Agrandir", "Fermer"][i]} className="flex h-full w-[51px] items-center justify-center">
            <svg viewBox="0 0 12 12" className="size-3" fill="none" stroke="#fff" strokeWidth="1.200" aria-hidden="true"><path d={d} /></svg>
          </button>
        ))}
      </header>

      <nav className="flex h-[23px] shrink-0 items-center bg-white">
        <svg viewBox="0 0 18 18" className="size-[18px]" aria-hidden="true">{logo}</svg>
        {["Fichier", "Modifier", "Affichage", "Insérer", "Assigner", "Calculer", "Résultats", "Outils", "Options", "Fenêtre", "CAO-BIM", "Aide"].map((m) => <button key={m} className="pl-[9px] pr-[10px]">{m}</button>)}
        <span className="ml-auto"><Tri dir=">" className="mr-[3px] text-[#777]" /></span>
        <input aria-label="Recherche" placeholder="Entrez un mot-clé (Alt+Q)" className="h-[20px] w-[256px] bg-[#e9e9f4] px-[2px] outline-none placeholder:text-[#777]" />
        <svg viewBox="0 0 20 14" className="ml-1 mr-[156px] w-5" fill="none" stroke="#888" strokeWidth="1.500" aria-hidden="true"><path d="M1 3h7M1 8h7M1 12h16M16 8l3 3" /><circle cx="13" cy="5" r="3.500" /></svg>
        <span>Dlubal Software SARL</span>
        <button aria-label="Réduire la fenêtre" className="ml-[14px] mr-[14px] mt-[5px] h-[3px] w-2 bg-[#333]" />
        <button aria-label="Restaurer la fenêtre" className="mr-2"><Restore /></button>
        <button aria-label="Fermer la fenêtre" className="mr-[6px]"><Cross /></button>
      </nav>

      <div className="flex h-[30px] shrink-0 items-center border-t border-[#e6e6e6]">
        <Grip />
        <Bar items={["Nouveau modèle", "Ouvrir", "Dlubal Center", "Blocs", "Gestionnaire", "Enregistrer", "Imprimer", "v", "Nouveau rapport", "Rapport", "|", "Annuler", "v-", "Rétablir", "v-", "|", "*Navigateur", "*Tables", "Panneau", "Console", "Script", "Blocs-notes", "#", "Plan de travail", "v", "Sélection"]} />
        <Bar slot="w-[28px]" items={["=", "Nouveau cas", "Cas de charge"]} />
        <label className="ml-px flex h-[23px] w-[300px] shrink-0 items-center bg-[#e6e6f1] pl-[6px]">
          <span className="flex h-4 w-[33px] items-center justify-center bg-[#cd6564] text-white">ELU</span>
          <span className="w-[82px] pl-[5px]">SP1</span>
          <i className="mr-[6px] h-[17px] w-[2px] bg-white" />
          <select aria-label="Cas de charge actif" className="w-[155px] appearance-none bg-transparent outline-none"><option>ELU (STR/GEO) - Permane...</option></select>
          <Thin />
        </label>
        <span className="w-[2px] shrink-0" /><Step dir="<" /><Step dir=">" /><span className="w-px shrink-0" />
        <Bar items={["Supprimer filtre", "v", "Afficher appuis", "Valeurs appuis", "Afficher charges", "Valeurs charges", "Afficher solides", "*Maillage"]} />
        <Bar slot="w-[28px]" items={["v*", "Résultats", "Valeurs résultats", ":", "Calculer", "Boulier", "v", "#"]} />
        <Bar items={["Zoom tout", "Vue filaire", "Vue modifier", "Vue perspective", "|", "Vue X"]} />
        <button aria-label="Plus" className="ml-auto pr-1 text-[14px]">»</button>
      </div>

      <div className="flex h-[30px] shrink-0 items-center border-t border-[#e6e6e6]">
        <Grip />
        <Bar items={["Nœud", "v", "Ligne", "Barre", "v", "Polyligne", "v", "|", "Appui nodal", "Appui linéique", "Appui surfacique", "|", "Surface", "v", "Coque", "v", "Ouverture", "v", "Intersection", "v", "Solide", "|", "Jonction", "v-", "|", "Charge nodale", "Charge de barre", "Charge linéique", "Charge surfacique", "Charge libre", "v", "Charge polygonale", "v", "=", "Filtre", "|", "Diagramme", "Portique", "Animation", ":", "Déformée", "Surface grise", "Dé", "Réactions", "Rampe", ":", "Efforts internes", "Contraintes", "Ressorts", "Appuis linéiques", "Sections résultats", "Résultats étoile", "Épingle", "|", "Vérification", "v-", "=", "Grille", "Accrochage", "*Plan XY", "Plan XZ", "Plan YZ", "|", "Copier", "Rotation", "Miroir", "Supprimer", "Options d’affichage"]} />
      </div>

      <main className="flex min-h-0 flex-1 pt-[2px]">
        <aside className="flex w-[332px] shrink-0 flex-col pl-px">
          <div className="flex h-[23px] shrink-0 items-center bg-[#d7e5f3] pl-[6px] pr-2">
            <h2 className="flex-1 font-semibold text-[#3b3b3b]">Navigateur - Données</h2>
            <button aria-label="Détacher" className="mr-3"><Restore /></button>
            <button aria-label="Fermer le navigateur"><Cross /></button>
          </div>
          <div className="mt-[2px] flex min-h-0 flex-1 border border-b-0 border-[#cdcbd9] bg-white pt-px">
            <ul className="min-w-0 flex-1 overflow-hidden">
              {tree.map(([lv, ch, ic, label]) => (
                <li key={label} className={`flex h-5 items-center whitespace-nowrap ${indent[lv]}`}>
                  {lv > 0 && <span className="flex w-[23px] shrink-0 justify-center">{ch && <Chevron dir={ch} className={ch === "v" ? "text-[#444]" : "text-[#999]"} />}</span>}
                  <span className="flex w-7 shrink-0 justify-center"><svg viewBox="0 0 18 18" className="size-[18px]" fill="none" aria-hidden="true">{treeIcons[ic]}</svg></span>
                  <span className={lv === 1 ? "font-semibold text-black" : ""}>{label}</span>
                </li>
              ))}
            </ul>
            <div className="mr-[2px] flex w-[17px] shrink-0 flex-col items-center bg-[#f0f0f0]">
              <span className="flex h-[18px] items-center"><Chevron dir="^" /></span>
              <i className="w-full flex-[8_1_0%] bg-[#cdcdcd]" />
              <i className="flex-1" />
              <span className="flex h-[18px] items-center"><Chevron dir="v" /></span>
            </div>
          </div>
          <div className="flex h-[29px] shrink-0 border-x border-b border-[#cdcbd9] bg-[#f2f2f2] pb-[3px]">
            <button aria-label="Données" className="flex w-[43px] items-center justify-center bg-white">
              <svg viewBox="0 0 22 22" className="size-[20px]" fill="none" aria-hidden="true">{r(7, 2, 14, 10, "#e4edf8", "#7c8aa0")}{r(7, 2, 14, 3, "#3b78d8")}{p("M1 6h6l2 2h8v9h-16z", "#a88510", 1, "#f2c531")}{p("M10 11h11l-3 5h-4z", "#27517f", 1, "#4a80b8")}{c(15, 19, 2)}</svg>
            </button>
            <button aria-label="Affichage" className="flex w-[42px] items-center justify-center border-x border-[#cdcbd9] bg-[#eaeaea]">
              <svg viewBox="0 0 16 12" className="w-4" fill="none" aria-hidden="true"><path d="M1 6q7 -8 14 0q-7 8 -14 0z" stroke="#333" fill="#fff" /><circle cx="8" cy="6" r="3.500" fill="#232f90" /></svg>
            </button>
            <button aria-label="Vues" className="flex w-[42px] items-center justify-center bg-[#eaeaea]">
              <svg viewBox="0 0 16 12" className="w-4" aria-hidden="true"><path d="M0 1h10v10h-10zM10 6l6 -4v8z" fill="#555" /></svg>
            </button>
          </div>
          <div className="h-px shrink-0" />
        </aside>

        <div className="ml-[5px] flex min-w-0 flex-1 flex-col">
          <section className="mb-1 mt-[2px] min-h-0 flex-1 bg-white"><Model /></section>

          <section className="flex shrink-0 flex-col">
            <div className="flex h-[23px] items-center bg-[#d7e5f3] pl-[6px] pr-2 pt-px">
              <h2 className="flex-1 font-semibold text-[#3b3b3b]">Matériaux</h2>
              <button aria-label="Détacher le tableau" className="mr-3"><Restore /></button>
              <button aria-label="Fermer le tableau"><Cross /></button>
            </div>
            <nav className="flex h-[23px] items-center pt-[3px]">
              {["Accéder à", "Modifier", "Sélection", "Affichage", "Paramètres"].map((m) => <button key={m} className="pl-[9px] pr-[10px]">{m}</button>)}
            </nav>
            <div className="flex h-[31px] items-center border-t border-[#e6e6e6] pl-[2px]">
              <Combo label="Catégorie" value="Structure" className="w-[212px] pl-[5px]" icon={
                <svg viewBox="0 0 16 16" className="mr-[5px] size-4" fill="none" aria-hidden="true">{r(0.5, 0.5, 15, 15, "#cfd8d0", "#667")}{p("M4 3v13M8 3v13M12 3v13M0 7h16M0 11h16", "#aab5ab", 0.8)}{r(0, 0, 16, 3, "#27409b")}{p("M3 14l10 -9v9zM8 12h3v-2z", "#2f9a4a", 1.3, "#a6e0ae")}</svg>} />
              <span className="w-px" /><Step dir="<" off /><span className="w-px" /><Step dir=">" />
              <Bar items={["|"]} />
              <i className="ml-[2px] mr-[3px] w-px self-stretch bg-[#dcdcdc]" />
              <Combo label="Groupe d’objets" value="Objets de base" className="w-[291px] pl-[6px]" icon={<svg viewBox="0 0 18 18" className="mr-[5px] size-4" fill="none" aria-hidden="true">{treeIcons.bar}</svg>} />
              <span className="w-px" /><Step dir="<" off /><span className="w-px" /><Step dir=">" />
              <Bar items={[":", "*Synchroniser vue", "*Synchroniser table", "|", "Tableau", "Insérer ligne", "Ajouter", "Réduire", "Fractionner", ":", "Effacer", ":", "Déplacer ligne", "Supprimer ligne", "Décaler gauche", "Décaler droite", ":", "Vue tableau", ":", "Renommer", "Fonction", "Supprimer fonction", "Voir fonction", "|", "Excel", "|", "Afficher valeurs", "|", "Décimales", "|"]} />
              <button aria-label="Plus" className="ml-auto pr-1 text-[14px]">»</button>
            </div>

            <div className="flex border-l border-t border-[#cdcbd9]">
              <div className="min-w-0 flex-1 overflow-hidden">
                <table className="w-full table-fixed border-collapse">
                  <thead>
                    <tr className="h-[10px]">{cols.map(([w], i) => <td key={i} className={`border-r border-[#f2f2f2] bg-[#e0e0e0] p-0 ${w}`} />)}</tr>
                    <tr className="h-9">
                      {cols.map(([w, h], i) => <th key={i} scope="col" className={`whitespace-nowrap border-b border-r border-[#d0d0d0] p-0 align-bottom font-normal leading-[17px] ${i ? "bg-[#f0f0f0]" : "bg-[#e0e0e0]"}`}>{h}</th>)}
                    </tr>
                  </thead>
                  <tbody>
                    {rows.map(([n, name, color], k) => (
                      <tr key={n} className="h-[18px]">
                        <th scope="row" className="border-b border-[#f4f4f4] bg-[#e0e0e0] p-0 font-normal">{n}</th>
                        <td className="border-b border-r border-[#e0e0e0] bg-white p-0">
                          <span className={`flex h-[17px] items-center gap-[6px] pl-[3px] ${k === 0 ? "border border-dotted border-black" : "ml-px"}`}><Swatch color={color} />{name}</span>
                        </td>
                        <td className="border-b border-r border-[#e0e0e0] bg-white p-0"><span className="flex items-center gap-[6px] pl-1"><Swatch color="bg-[#e87832]" />Acier</span></td>
                        <td className="border-b border-r border-[#e0e0e0] bg-white p-0"><span className="flex items-center gap-[6px] pl-1"><Swatch color="bg-[#ccffff]" />Isotrope | Linéaire élastique</span></td>
                        {nums.map((v, i) => <td key={i} className="border-b border-r border-[#e0e0e0] bg-[#fafaf3] p-0 pr-1 text-right">{v}</td>)}
                      </tr>
                    ))}
                  </tbody>
                </table>
              </div>
              <div className="flex w-[19px] shrink-0 flex-col items-center bg-[#f0f0f0]">
                <span className="flex h-[18px] items-center"><Chevron dir="^" /></span>
                <i className="h-[27px] w-4 bg-[#cdcdcd]" />
                <span className="mt-auto flex h-[18px] items-center"><Chevron dir="v" /></span>
              </div>
            </div>

            <div className="flex h-[17px] items-center border-b border-l border-[#cdcbd9] bg-[#f0f0f0]">
              <span className="flex w-[19px] justify-center"><Chevron dir="<" /></span>
              <i className="h-full w-[983px] bg-[#cdcdcd]" />
              <span className="ml-auto mr-[24px]"><Chevron dir=">" /></span>
            </div>

            <div className="flex h-[27px] items-start overflow-hidden whitespace-nowrap pt-[2px]">
              <div className="flex h-[24px] w-[145px] shrink-0 items-center justify-between pl-1 pr-[6px]">
                {[["Premier", "M2 1v8M9 1v8l-5 -4z", "#888"], ["Précédent", "M8 1v8l-5 -4z", "#888"], null, ["Suivant", "M3 1v8l5 -4z", "#444"], ["Dernier", "M8.500 1v8M2 1v8l5 -4z", "#444"]].map((b) => b
                  ? <button key={b[0]} aria-label={b[0]}><svg viewBox="0 0 10 10" className="size-[10px]" stroke={b[2]} fill={b[2]} aria-hidden="true"><path d={b[1]} /></svg></button>
                  : <span key="n" className="px-1">1 sur 15</span>)}
              </div>
              <button aria-current="page" className="h-[25px] w-[75px] shrink-0 border border-t-0 border-[#cdcbd9] bg-white">Matériaux</button>
              {tabs.map(([s, w]) => <button key={s} className={`h-[23px] shrink-0 border-b-2 border-r-2 border-[#cdcbd9] bg-[#eeeeee] ${w}`}>{s}</button>)}
              <button aria-label="Ensembles" className="h-[23px] flex-1 overflow-hidden border-b-2 border-[#cdcbd9] bg-[#eeeeee] pl-2 text-left">Ense</button>
              <span className="flex h-[23px] items-center gap-2 pl-1 pr-1">
                <button aria-label="Onglets précédents"><svg viewBox="0 0 8 12" className="w-2" aria-hidden="true"><path d="M8 0v12l-7 -6z" fill="#888" /></svg></button>
                <button aria-label="Onglets suivants"><svg viewBox="0 0 8 12" className="w-2" aria-hidden="true"><path d="M0 0v12l7 -6z" fill="#000" /></svg></button>
              </span>
            </div>
          </section>
        </div>
      </main>

      <div className="flex h-[28px] shrink-0 items-center">
        <Bar slot="w-[27px]" items={["Système de coordonnées"]} />
        <Combo label="Système de coordonnées actif" value="1 - Global XYZ" className="w-[148px] pl-[6px]" icon={<i className="mr-[6px] size-3 bg-[#ccffff]" />} />
        <span className="w-px" />
        <Bar slot="w-[27px]" items={["|", "Vue clipping", "Haut", "Côté", "Boîte", "Pivoter", "|", "Calques", "Cote", "v", "Cotation", "Personne", "Note", "|", "Mesurer", "v", "Renuméroter", "v", "|", "Ligne parallèle", "Ligne angle", "Rectangle", "v", "Ligne coudée", "Arc", "Parallèles", "Perpendiculaire", "Diviser", "Polygone", "Tangente", "|"]} />
        <button aria-label="Plus" className="w-4 shrink-0 text-[14px]">»</button>
        <span className="w-[15px] shrink-0" />
        <Bar slot="w-[34px]" items={["Équerre", "Points", "Nouvelle grille"]} />
        <Bar slot="w-[28px]" box="h-[25px] w-[25px]" items={["Grille visible", "Nouveau guide", "*Guides visibles"]} />
        <div className="ml-[16px] mr-[2px] flex flex-1 justify-between">
          <Bar slot="w-[25px]" box="h-[25px] w-[25px]" items={["*Aimant grille", "*Aimant", "*Extrémité", "*Centre", "*Milieu", "*Orthogonal", "Proche", "Parallèle", "Tangent", "Quadrant", "Croisement", "Prolongement", "Intersection apparente", "Nuage", "*Points de grille", "Lignes guides", "*Calque fond", "*Objets ligne", "*Objets nœud"]} />
        </div>
      </div>

      <footer className="flex h-[18px] shrink-0 items-center bg-[#e8e8f2] pt-px">
        <span className="h-4 flex-1 border-r border-[#cfcfd8]" />
        <span className="h-4 w-[118px] border-r border-[#cfcfd8]" />
        <span className="h-4 w-[230px] border-r border-[#cfcfd8] pl-[5px]">SC : Global XYZ</span>
        <span className="h-4 w-[73px] border-r border-[#cfcfd8] pl-1">Plan : XY</span>
        <span className="h-4 w-[84px] border-r border-[#cfcfd8]" />
        <span className="h-4 w-[85px] border-r border-[#cfcfd8]" />
        <span className="h-4 w-[84px] border-r border-[#cfcfd8]" />
        <svg viewBox="0 0 20 16" className="w-5" fill="#aaa" aria-hidden="true"><path d="M14 4h2v2h-2zM10 8h2v2h-2zM14 8h2v2h-2zM6 12h2v2h-2zM10 12h2v2h-2zM14 12h2v2h-2z" /></svg>
      </footer>
    </div>
  );
}
